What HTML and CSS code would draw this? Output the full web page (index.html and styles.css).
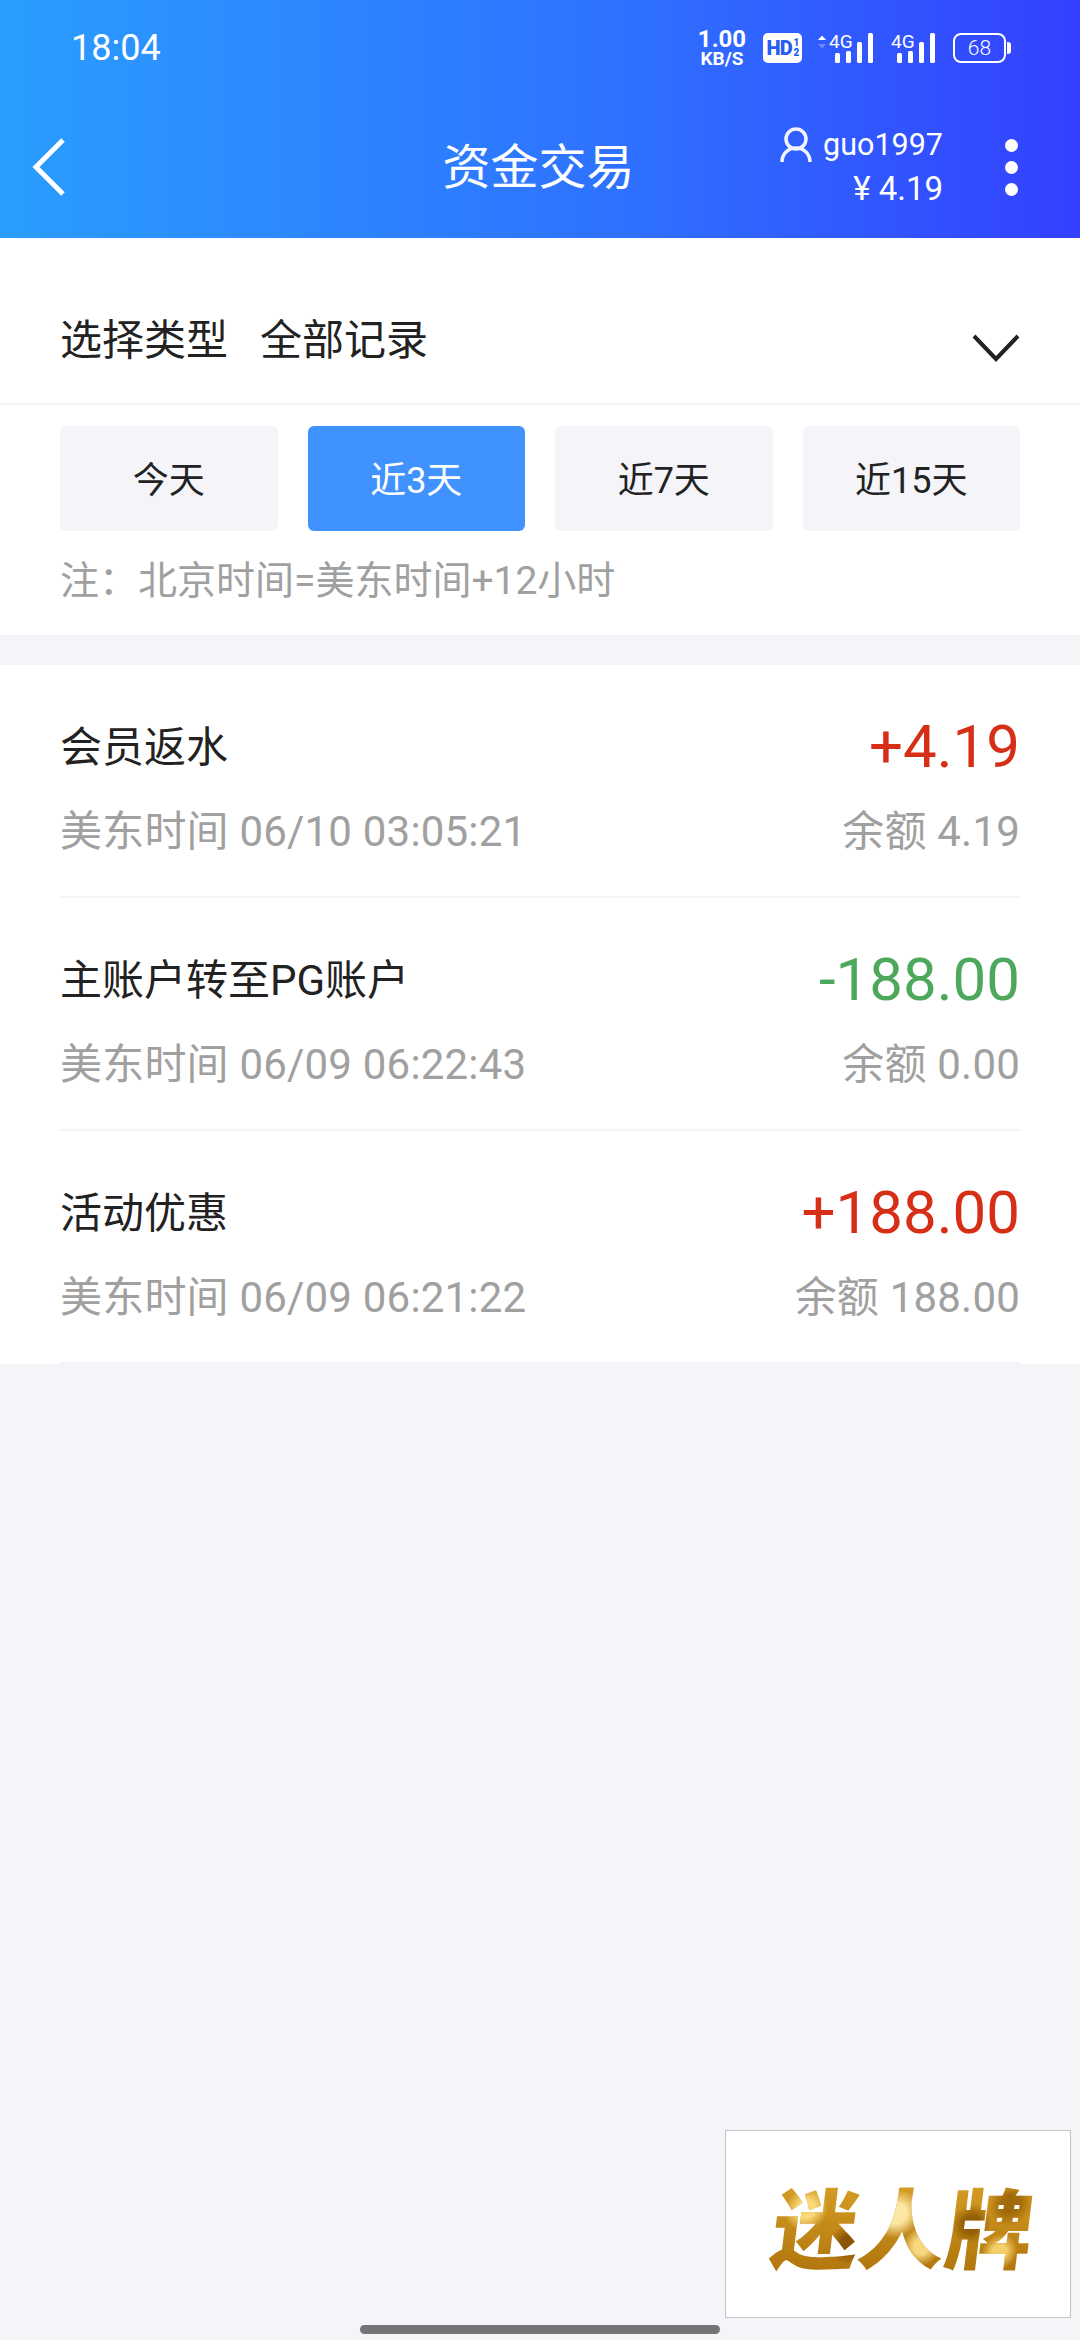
FILE: index.html
```html
<!DOCTYPE html>
<html lang="zh-CN">
<head>
    <meta charset="UTF-8">
    <meta name="viewport" content="width=device-width, initial-scale=1.0">
    <title>资金交易</title>
    <link rel="stylesheet" href="styles.css">
</head>
<body>
    <header class="top">
        <div class="status-bar">
            <span class="clock">18:04</span>
            <div class="status-icons">
                <div class="speed"><b>1.00</b><b class="speed-unit">KB/S</b></div>
                <div class="hd-badge">HD<span class="hd-num">1<br>2</span></div>
                <div class="signal">
                    <svg class="updown" width="10" height="16" viewBox="0 0 10 16"><path d="M1 6 5 1.500 9 6Z" fill="#fff"/><path d="M1 10 5 14.500 9 10Z" fill="#6d8cff"/></svg>
                    <div class="net">
                        <span class="net-label">4G</span>
                        <svg class="bars" width="38" height="30" viewBox="0 0 38 30"><g fill="#fff"><rect x="0" y="20" width="5" height="10" rx="1.500"/><rect x="11" y="18" width="5" height="12" rx="1.500"/><rect x="22" y="9" width="5" height="21" rx="1.500"/><rect x="33" y="0" width="5" height="30" rx="1.500"/></g></svg>
                    </div>
                </div>
                <div class="net">
                    <span class="net-label">4G</span>
                    <svg class="bars" width="38" height="30" viewBox="0 0 38 30"><g fill="#fff"><rect x="0" y="20" width="5" height="10" rx="1.500"/><rect x="11" y="18" width="5" height="12" rx="1.500"/><rect x="22" y="9" width="5" height="21" rx="1.500"/><rect x="33" y="0" width="5" height="30" rx="1.500"/></g></svg>
                </div>
                <div class="battery">
                    <div class="battery-body">68</div>
                    <div class="battery-cap"></div>
                </div>
            </div>
        </div>
        <div class="nav-bar">
            <svg class="back" width="36" height="60" viewBox="0 0 36 60"><path d="M32 3 5 30l27 27" fill="none" stroke="#fff" stroke-width="5"/></svg>
            <h1 class="nav-title">资金交易</h1>
            <div class="account">
                <div class="account-name">
                    <svg width="32" height="36" viewBox="0 0 32 36"><g fill="none" stroke="#f2f5ff" stroke-width="3.500"><circle cx="16" cy="12" r="10"/><path d="M2 35c0-8 6-14 14-14s14 6 14 14"/></g></svg>
                    <span>guo1997</span>
                </div>
                <div class="account-money">¥ 4.19</div>
            </div>
            <div class="more"><i></i><i></i><i></i></div>
        </div>
    </header>

    <section class="filter">
        <div class="type-select">
            <span class="type-label">选择类型</span>
            <span>全部记录</span>
            <svg class="type-arrow" width="48" height="28" viewBox="0 0 48 28"><path d="M2 2 24 25 46 2" fill="none" stroke="#222" stroke-width="4"/></svg>
        </div>
        <div class="range-tabs">
            <div class="tab">今天</div>
            <div class="tab active">近3天</div>
            <div class="tab">近7天</div>
            <div class="tab">近15天</div>
        </div>
        <p class="note">注：北京时间=美东时间+12小时</p>
    </section>

    <section class="records">
        <div class="record">
            <div class="record-line">
                <span class="record-name">会员返水</span>
                <span class="amount plus">+4.19</span>
            </div>
            <div class="record-line sub">
                <span>美东时间 06/10 03:05:21</span>
                <span>余额 4.19</span>
            </div>
        </div>
        <div class="record">
            <div class="record-line">
                <span class="record-name">主账户转至PG账户</span>
                <span class="amount minus">-188.00</span>
            </div>
            <div class="record-line sub">
                <span>美东时间 06/09 06:22:43</span>
                <span>余额 0.00</span>
            </div>
        </div>
        <div class="record">
            <div class="record-line">
                <span class="record-name">活动优惠</span>
                <span class="amount plus">+188.00</span>
            </div>
            <div class="record-line sub">
                <span>美东时间 06/09 06:21:22</span>
                <span>余额 188.00</span>
            </div>
        </div>
    </section>

    <div class="promo"><span class="promo-text">迷人牌</span></div>
    <div class="home-bar"></div>
</body>
</html>
```

FILE: styles.css
```css
* {
    box-sizing: border-box;
}

html, body {
    margin: 0;
    padding: 0;
}

body {
    position: relative;
    width: 1080px;
    height: 2340px;
    overflow: hidden;
    background-color: #F4F4F9;
    font-family: Roboto, "Noto Sans CJK SC", sans-serif;
    color: #222;
}

/* header */
.top {
    height: 238px;
    background: linear-gradient(90deg, #2A9DFF 0%, #2F6FFF 60%, #3340FF 100%);
    color: #fff;
}

.status-bar {
    display: flex;
    justify-content: space-between;
    align-items: center;
    height: 96px;
    padding: 0 69px 0 71px;
}

.clock {
    font-size: 36px;
    line-height: 40px;
}

.status-icons {
    display: flex;
    align-items: center;
    height: 40px;
}

.speed {
    display: flex;
    flex-direction: column;
    align-items: center;
    width: 48px;
    margin-right: 17px;
}

.speed b {
    font-size: 24px;
    line-height: 21px;
}

.speed .speed-unit {
    font-size: 19px;
    line-height: 17px;
}

.hd-badge {
    display: flex;
    align-items: center;
    justify-content: center;
    width: 39px;
    height: 30px;
    margin-right: 15px;
    border-radius: 5px;
    background: #fff;
    color: #2A5CF0;
    font-size: 20px;
    font-weight: 900;
    letter-spacing: -1px;
}

.hd-num {
    font-size: 10px;
    line-height: 10px;
    margin-left: 2px;
}

.signal {
    display: flex;
    align-items: flex-start;
    gap: 2px;
    margin-right: 18px;
}

.updown {
    margin-top: 1px;
}

.net {
    position: relative;
    width: 44px;
    height: 30px;
}

.net-label {
    position: absolute;
    left: 0;
    top: -1px;
    font-size: 19px;
    line-height: 20px;
}

.net .bars {
    position: absolute;
    right: 0;
    top: 0;
}

.net + .battery {
    margin-left: 18px;
}

.battery {
    display: flex;
    align-items: center;
    gap: 1px;
}

.battery-body {
    width: 53px;
    height: 30px;
    border: 2px solid #fff;
    border-radius: 8px;
    text-align: center;
    font-size: 21px;
    font-weight: 300;
    line-height: 26px;
}

.battery-cap {
    width: 4px;
    height: 12px;
    border-radius: 0 3px 3px 0;
    background: #fff;
}

.nav-bar {
    position: relative;
    display: flex;
    align-items: center;
    height: 142px;
    padding: 0 62px 0 31px;
}

.nav-title {
    position: absolute;
    left: 0;
    right: 0;
    top: 40px;
    margin: 0;
    padding-right: 3px;
    text-align: center;
    font-size: 48px;
    line-height: 64px;
    font-weight: 400;
}

.account {
    margin-left: auto;
    text-align: right;
    font-size: 30.500px;
    line-height: 44px;
}

.account-name {
    display: flex;
    align-items: center;
    gap: 11px;
}

.account-money {
    font-size: 33px;
}

.more {
    display: flex;
    flex-direction: column;
    gap: 9px;
    margin-left: 62px;
}

.more i {
    width: 13px;
    height: 13px;
    border-radius: 50%;
    background: #fff;
}

/* filter */
.filter {
    height: 397px;
    background: #fff;
}

.type-select {
    position: relative;
    display: flex;
    align-items: center;
    gap: 32px;
    height: 167px;
    padding: 31px 60px 0;
    border-bottom: 2px solid #F4F4F9;
    font-size: 42px;
}

.type-arrow {
    position: absolute;
    right: 60px;
    top: 96px;
}

.range-tabs {
    display: grid;
    grid-template-columns: repeat(4, 1fr);
    gap: 30px;
    padding: 21px 60px 0;
}

.tab {
    height: 105px;
    border-radius: 6px;
    background: #F4F4F9;
    text-align: center;
    font-size: 36px;
    line-height: 110px;
}

.tab.active {
    background: #4093FF;
    color: #fff;
}

.note {
    margin: 0;
    padding: 22px 60px 0;
    color: #A0A0A0;
    font-size: 39px;
    line-height: 56px;
}

/* list */
.records {
    margin-top: 30px;
    background: #fff;
}

.record {
    height: 233px;
    padding-top: 50px;
    margin: 0 60px;
    border-bottom: 2px solid #F4F4F9;
}

.record-line {
    display: flex;
    justify-content: space-between;
    align-items: center;
    height: 62px;
}

.record-name {
    margin-bottom: 6px;
    font-size: 42px;
}

.amount {
    font-size: 60px;
}

.plus {
    color: #D72E17;
}

.minus {
    color: #4EA85C;
}

.sub {
    margin-top: 19px;
    color: #A0A0A0;
    font-size: 42px;
    letter-spacing: 0.200px;
}

/* overlays */
.promo {
    position: absolute;
    left: 725px;
    top: 2130px;
    display: flex;
    align-items: center;
    justify-content: center;
    width: 346px;
    height: 188px;
    padding-left: 10px;
    border: 1px solid #C4C4C8;
    background: #fff;
}

.promo-text {
    display: inline-block;
    font-family: "Noto Sans CJK SC", sans-serif;
    font-size: 87px;
    line-height: 100px;
    font-weight: 900;
    color: transparent;
    transform: skewX(-7deg);
    background:
        radial-gradient(circle at 12% 35%, rgba(255, 225, 130, 0.9) 0 9px, transparent 22px),
        radial-gradient(circle at 30% 70%, rgba(120, 70, 0, 0.75) 0 8px, transparent 20px),
        radial-gradient(circle at 47% 40%, rgba(255, 235, 170, 0.95) 0 10px, transparent 24px),
        radial-gradient(circle at 58% 72%, rgba(255, 225, 140, 0.9) 0 8px, transparent 20px),
        radial-gradient(circle at 76% 50%, rgba(130, 80, 0, 0.75) 0 8px, transparent 20px),
        radial-gradient(circle at 90% 30%, rgba(150, 95, 5, 0.8) 0 9px, transparent 22px),
        radial-gradient(circle at 88% 78%, rgba(255, 220, 120, 0.85) 0 7px, transparent 18px),
        linear-gradient(180deg, #D9A227, #B0740C);
    -webkit-background-clip: text;
    background-clip: text;
}

.home-bar {
    position: absolute;
    left: 360px;
    top: 2325px;
    width: 360px;
    height: 9px;
    border-radius: 5px;
    background: #747474;
}
```
